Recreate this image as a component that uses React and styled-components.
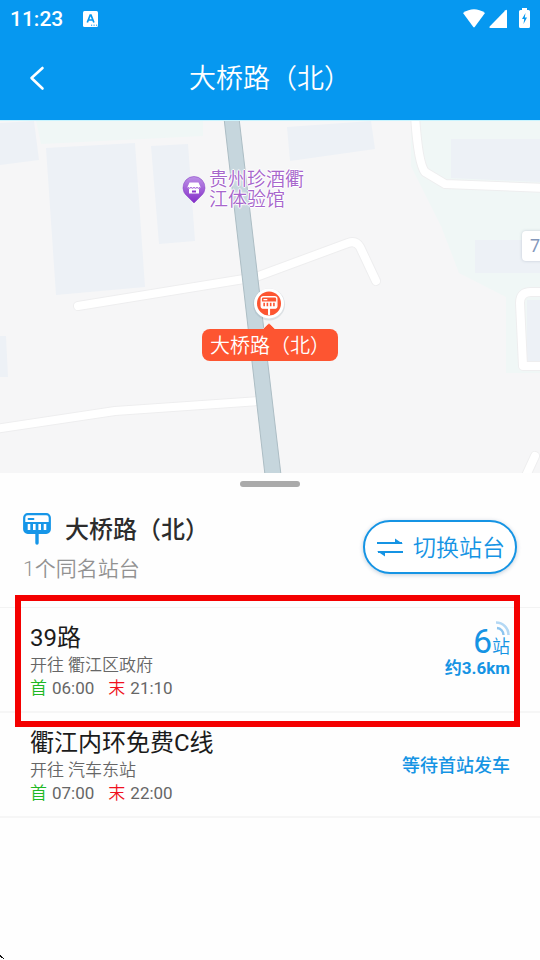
import React from "react";
import styled, { createGlobalStyle, css } from "styled-components";

const BLUE = "#0698f0";
const INK_BLUE = "#1594e4";
const ORANGE = "#fd5531";

const GlobalStyle = createGlobalStyle`
  *, *::before, *::after { box-sizing: border-box; }
  body {
    margin: 0;
    background: #fefefe;
    color: #1b1b1b;
    font-family: Roboto, "Noto Sans CJK SC", sans-serif;
  }
  h1, h2, h3, p, ul { margin: 0; padding: 0; font-weight: 400; }
  button { font-family: inherit; cursor: pointer; }
`;

const Page = styled.div`
  position: relative;
  min-height: 100vh;
  display: flex;
  flex-direction: column;
`;

const TopBar = styled.header`
  background: ${BLUE};
  color: #fff;
`;

const StatusBar = styled.div`
  display: flex;
  align-items: center;
  height: 36px;
  padding: 0 10px;
`;

const Clock = styled.time`
  flex: 1;
  display: flex;
  align-items: center;
  gap: 20px;
  padding-top: 2px;
  font-size: 21px;
  line-height: 34px;
  font-weight: 500;
`;

const StatusIcons = styled.div`
  display: flex;
  align-items: center;
  svg { display: block; }
`;

const NavBar = styled.div`
  display: grid;
  grid-template-columns: 56px 1fr 56px;
  align-items: center;
  height: 84px;
  padding: 0 10px;
`;

const BackButton = styled.button`
  display: flex;
  align-items: center;
  justify-content: center;
  width: 54px;
  height: 56px;
  padding: 0;
  border: 0;
  background: none;
  color: inherit;
`;

const PageTitle = styled.h1`
  padding-top: 2px;
  font-size: 27px;
  line-height: 40px;
  text-align: center;
  font-weight: 350;
`;

const MapArea = styled.section`
  position: relative;
  height: 353px;
  overflow: hidden;
  background: #f6f6f7;
`;

const MapDrawing = styled.svg`
  display: block;
  width: 100%;
  height: 100%;
`;

const Poi = styled.div`
  position: absolute;
  left: calc(50% - 88px);
  top: 50px;
  display: flex;
  align-items: center;
  gap: 3px;
  color: #a766cc;
  font-size: 19px;
  line-height: 20px;
  font-weight: 350;
  text-shadow: 1px 0 #fff, -1px 0 #fff, 0 1px #fff, 0 -1px #fff, 0 0 3px #fff;
`;

const StopMarker = styled.div`
  position: absolute;
  left: 50%;
  top: 166px;
  transform: translateX(-50%);
  display: flex;
  flex-direction: column;
  align-items: center;
  svg { display: block; }
`;

const StopLabel = styled.span`
  padding: 2px 8px 0;
  border-radius: 8px;
  background: ${ORANGE};
  color: #fff;
  font-size: 20px;
  line-height: 30px;
  font-weight: 350;
  white-space: nowrap;
`;

const RoadBadge = styled.span`
  position: absolute;
  right: -8px;
  top: 111px;
  padding: 0 8px;
  border-radius: 4px;
  background: #fff;
  box-shadow: 0 0 3px rgba(90, 110, 140, 0.3);
  color: #8497bb;
  font-size: 18px;
  line-height: 30px;
`;

const Sheet = styled.main`
  flex: 1;
  background: #fefefe;
`;

const Handle = styled.div`
  width: 60px;
  height: 6px;
  margin: 8px auto 0;
  border-radius: 3px;
  background: #aaa;
`;

const StationHeader = styled.section`
  display: flex;
  align-items: flex-start;
  justify-content: space-between;
  height: 120px;
  padding: 23px 23px 0;
`;

const StationName = styled.div`
  display: flex;
  align-items: center;
  gap: 14px;
  h2 {
    padding-top: 2px;
    font-size: 24px;
    line-height: 36px;
    font-weight: 500;
    color: #2c2c2c;
  }
`;

const StationNote = styled.p`
  margin-top: 3px;
  color: #929292;
  font-size: 21px;
  line-height: 36px;
  font-weight: 350;
`;

const SwitchButton = styled.button`
  display: flex;
  align-items: center;
  gap: 9px;
  height: 54px;
  margin-top: 10px;
  padding: 0 10px 0 11px;
  border: 2px solid ${INK_BLUE};
  border-radius: 27px;
  background: #fff;
  box-shadow: 0 1px 4px rgba(0, 60, 110, 0.25);
  color: ${INK_BLUE};
  font-size: 23px;
  line-height: 36px;
  font-weight: 350;
`;

const ButtonLabel = styled.span`
  padding-top: 3px;
`;

const RouteList = styled.ul`
  list-style: none;
  border-top: 1px solid #f3f3f3;
`;

const RouteRow = styled.li`
  position: relative;
  display: flex;
  align-items: center;
  justify-content: space-between;
  height: 105px;
  padding: 0 30px;
  border-bottom: 2px solid #f6f6f6;
  ${(p) =>
    p.$marked &&
    css`
      &::after {
        content: "";
        position: absolute;
        inset: -13px 20px -16px 15px;
        border: 6px solid #f40000;
        z-index: 1;
        pointer-events: none;
      }
    `}
`;

const RouteInfo = styled.div`
  padding-top: 2px;
`;

const RouteName = styled.h3`
  font-size: 24px;
  line-height: 30px;
`;

const Detail = styled.p`
  display: flex;
  gap: ${(p) => (p.$spaced ? "14px" : "4px")};
  color: #666;
  font-size: 17px;
  line-height: ${(p) => (p.$spaced ? "22px" : "24px")};
  font-weight: ${(p) => (p.$spaced ? 400 : 350)};
`;

const Hour = styled.span`
  display: flex;
  gap: 5px;
`;

const HourTag = styled.span`
  color: ${(p) => (p.$last ? "#f01020" : "#1fb823")};
  font-weight: 350;
`;

const Arrival = styled.div`
  position: relative;
  margin-bottom: 16px;
  color: ${INK_BLUE};
  text-align: right;
`;

const StopsAway = styled.p`
  font-size: 18px;
  line-height: 32px;
  height: 32px;
  font-weight: 350;
  span { font-size: 34px; font-weight: 400; }
`;

const Distance = styled.p`
  font-size: 17px;
  line-height: 22px;
  font-weight: 700;
`;

const SignalWaves = styled.svg`
  position: absolute;
  right: 0;
  top: -4px;
`;

const Waiting = styled.p`
  padding-top: 3px;
  color: ${INK_BLUE};
  font-size: 18px;
  line-height: 28px;
  font-weight: 500;
`;

const CornerMark = styled.svg`
  position: absolute;
  left: 0;
  bottom: 0;
`;

function StopGlyph({ color, paper }) {
  return (
    <>
      <path d="M14 20v10" stroke={color} strokeWidth="3.4" strokeLinecap="round" />
      <rect x="1.2" y="1.2" width="25.6" height="18.6" rx="3.5" fill={paper} stroke={color} strokeWidth="2.2" />
      <path d="M1.5 9h25v8a3 3 0 0 1-3 3h-19a3 3 0 0 1-3-3z" fill={color} />
      <path d="M5.5 6h5" stroke={color} strokeWidth="1.8" strokeLinecap="round" />
      <path d="M6 11v6M11.3 11v6M16.7 11v6M22 11v6" stroke={paper} strokeWidth="2.6" />
    </>
  );
}

function Lanes() {
  return (
    <>
      <path d="M78 186l166-27M256 157l92-34q8-3 12 4l16 34M-5 309l120-18 144-10M415-5q3 48 10 57l20 12 100 4" />
      <path d="M545 172h-14q-11 0-11 11l3 63h22M535 336l-11 24" />
    </>
  );
}

function StreetMap() {
  return (
    <MapDrawing viewBox="0 0 540 353" preserveAspectRatio="xMidYMid slice" aria-hidden="true">
      <path fill="#f6f6f7" d="M0 0h540v353H0z" />
      <path fill="#f0f7f6" d="M36 0h167v16L41 24zM411 0h129v253h-34v-76l-47-24-18-47-30-60z" />
      <g fill="#edf1f6">
        <path d="M0 3l34-2 5 39-39 5zM46 28l89-5 10 144-89 8zM151 26l37-2 7 97-36 3zM287 7l84-6 4 28-85 12zM451 19h89v43l-89-4zM475 120h65v33h-65zM0 216h6l2 41H0zM527 180h13v62h-13z" />
      </g>
      <g fill="none" strokeLinecap="round" strokeLinejoin="round">
        <g stroke="#eeeeef" strokeWidth="10">
          <Lanes />
        </g>
        <g stroke="#fff" strokeWidth="8">
          <Lanes />
        </g>
      </g>
      <path d="M224-2h15l42 357h-16z" fill="#c6d6dd" stroke="#acbdc4" strokeWidth="1" />
      <path d="M0 .5h540" stroke="#c8f4ff" />
    </MapDrawing>
  );
}

const routes = [
  { name: "39路", to: "衢江区政府", first: "06:00", last: "21:10", stops: 6, distance: "约3.6km" },
  { name: "衢江内环免费C线", to: "汽车东站", first: "07:00", last: "22:00" },
];

function Route({ route }) {
  return (
    <RouteRow $marked={Boolean(route.stops)}>
      <RouteInfo>
        <RouteName>{route.name}</RouteName>
        <Detail>
          <span>开往</span>
          <span>{route.to}</span>
        </Detail>
        <Detail $spaced>
          <Hour><HourTag>首</HourTag>{route.first}</Hour>
          <Hour><HourTag $last>末</HourTag>{route.last}</Hour>
        </Detail>
      </RouteInfo>
      {route.stops ? (
        <Arrival>
          <SignalWaves width="15" height="15" viewBox="0 0 15 15" fill="none" aria-hidden="true">
            <path d="M1 1.5A12.5 12.5 0 0 1 13.5 14" stroke="#b4d8f4" strokeWidth="2.6" />
            <path d="M2 7a7 7 0 0 1 6.5 7" stroke="#8dc5ef" strokeWidth="2.4" />
          </SignalWaves>
          <StopsAway><span>{route.stops}</span>站</StopsAway>
          <Distance>{route.distance}</Distance>
        </Arrival>
      ) : (
        <Waiting>等待首站发车</Waiting>
      )}
    </RouteRow>
  );
}

export default function App() {
  return (
    <Page>
      <GlobalStyle />
      <TopBar>
        <StatusBar>
          <Clock>
            11:23
            <svg width="15" height="16" viewBox="0 0 15 16" aria-hidden="true">
              <rect width="15" height="16" rx="1.5" fill="#fff" />
              <path d="M4.3 11.5L7.2 4h.8l2.9 7.5M5.3 9h4.6" fill="none" stroke={BLUE} strokeWidth="1.7" />
              <path d="M8 14.2h1.2M10.5 14.2h1.2M13 14.2h1.2" stroke={BLUE} strokeWidth="1" />
            </svg>
          </Clock>
          <StatusIcons>
            <svg width="67" height="22" viewBox="0 0 67 22" fill="#fff" aria-hidden="true">
              <path d="M0 6Q11-1.500 22 6L11.700 20q-.7.800-1.400 0z" />
              <path d="M44 3.500V21H27.500q-2-.2-.6-1.800L42.500 3.200q1.300-1 1.500.3z" />
              <path fillRule="evenodd" d="M59 1h5v2h1.500q1.500 0 1.500 1.500v15q0 1.500-1.500 1.500h-8Q56 21 56 19.500v-15Q56 3 57.500 3H59zM62.500 6l-3.500 6h2.200l-.7 5 3.500-6.500h-2.200z" />
            </svg>
          </StatusIcons>
        </StatusBar>
        <NavBar>
          <BackButton type="button" aria-label="返回">
            <svg width="18" height="26" viewBox="0 0 18 26" fill="none" aria-hidden="true">
              <path d="M14.500 3L3.500 13l11 10.500" stroke="#fff" strokeWidth="2.600" strokeLinecap="round" strokeLinejoin="round" />
            </svg>
          </BackButton>
          <PageTitle>大桥路（北）</PageTitle>
        </NavBar>
      </TopBar>

      <MapArea aria-label="地图">
        <StreetMap />
        <Poi>
          <svg width="24" height="28" viewBox="0 0 24 28" aria-hidden="true">
            <defs>
              <linearGradient id="poi" x1="0" y1="0" x2="0" y2="1">
                <stop offset="0" stopColor="#bd91e6" />
                <stop offset="1" stopColor="#842dc9" />
              </linearGradient>
            </defs>
            <path d="M12 27L5 20A11 11 0 1 1 19 20z" fill="url(#poi)" stroke="#8c48c8" strokeWidth=".6" />
            <path d="M7.500 6.500h9l2 4.500q-.2 1.500-1.500 1.500V17.500H7v-5q-1.300 0-1.500-1.500z" fill="#fff" />
            <path d="M6 11.500q1.500 1.500 3 0 1.500 1.500 3 0 1.500 1.500 3 0 1.500 1.500 3 0" fill="none" stroke="#994fd3" />
            <path d="M10 14.500h4v2h-4z" fill="#8e3acd" />
          </svg>
          <span>贵州珍酒衢<br />江体验馆</span>
        </Poi>
        <StopMarker>
          <svg width="36" height="43" viewBox="0 0 36 43" aria-hidden="true">
            <circle cx="17" cy="18.500" r="16" fill="#8497a5" opacity=".22" />
            <circle cx="17" cy="17.500" r="15" fill="#fff" />
            <circle cx="17" cy="17.500" r="12" fill={ORANGE} />
            <g transform="translate(8.500 10) scale(.61)"><StopGlyph color="#fff" paper={ORANGE} /></g>
            <path d="M8 46l8-8q1-1 2 0l8 8z" fill={ORANGE} stroke="#ffe7df" strokeWidth=".7" />
          </svg>
          <StopLabel>大桥路（北）</StopLabel>
        </StopMarker>
        <RoadBadge>7</RoadBadge>
      </MapArea>

      <Sheet>
        <Handle />
        <StationHeader>
          <div>
            <StationName>
              <svg width="28" height="32" viewBox="0 0 28 32" fill="none" aria-hidden="true">
                <StopGlyph color="#1696e8" paper="#fff" />
              </svg>
              <h2>大桥路（北）</h2>
            </StationName>
            <StationNote>1个同名站台</StationNote>
          </div>
          <SwitchButton type="button">
            <svg width="28" height="20" viewBox="0 0 28 20" fill="none" aria-hidden="true">
              <path d="M1 6h25M27 15H2" stroke={INK_BLUE} strokeWidth="1.800" />
              <path d="M19 1.500l8 5.400h-8zM9 19.500l-8-5.400h8z" fill={INK_BLUE} />
            </svg>
            <ButtonLabel>切换站台</ButtonLabel>
          </SwitchButton>
        </StationHeader>
        <RouteList>
          {routes.map((route) => <Route key={route.name} route={route} />)}
        </RouteList>
      </Sheet>
      <CornerMark width="5" height="5" viewBox="0 0 5 5" aria-hidden="true">
        <path d="M0 0h1v1h1v1h1v1h1v1H3V3H1V2H0z" fill="#111" />
      </CornerMark>
    </Page>
  );
}
